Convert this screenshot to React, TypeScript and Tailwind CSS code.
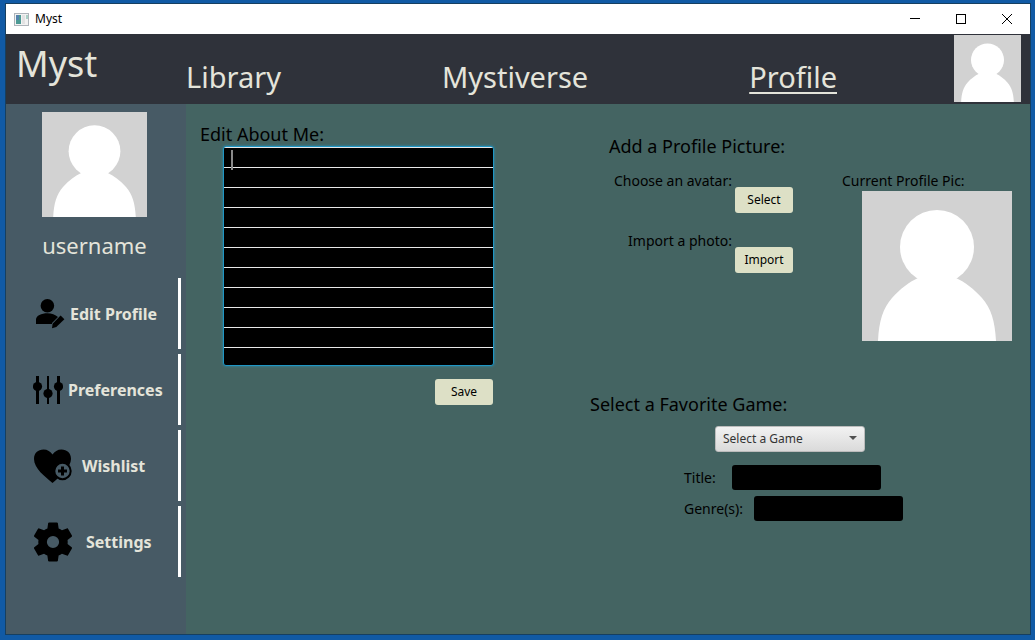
import type { ReactNode } from "react";

const comic = "font-['Comic_Sans_MS','Noto_Sans',sans-serif]";
const heading = "text-lg leading-6";
const caption = "text-sm leading-5";

function Avatar({ className }: { className: string }) {
  return (
    <svg viewBox="0 0 150 150" className={className} role="img" aria-label="Profile picture">
      <rect width="150" height="150" fill="#d2d2d2" />
      <circle cx="75" cy="56" r="37" fill="#fff" />
      <path
        d="M16 150C17 130 21 117 30 107C38 98 47 91 56 87H94C103 91 112 98 120 107C129 117 133 130 134 150Z"
        fill="#fff"
      />
    </svg>
  );
}

function EditProfileIcon() {
  return (
    <svg viewBox="0 0 30 30" className="ml-[3px] mr-1 h-[30px] w-[30px] shrink-0" aria-hidden="true">
      <circle cx="11.4" cy="6.8" r="6.8" />
      <path d="M0 25V20.5C0 16.5 5.5 14.2 11.4 14.2C15.6 14.2 19.3 15.6 22 18L16 24V25Z" />
      <path d="M24.6 16.6L28.4 20.2L20.3 28L16 29.2L16.6 24.8Z" />
    </svg>
  );
}

function PreferencesIcon() {
  return (
    <svg viewBox="0 0 30 30" className="mr-[5px] h-[30px] w-[30px] shrink-0" aria-hidden="true">
      <path d="M3 1H6V29H3ZM14 1H16V29H14ZM24 1H27V29H24Z" />
      <circle cx="4.5" cy="11.5" r="4.6" />
      <circle cx="15" cy="18.5" r="4.6" />
      <circle cx="25.5" cy="11.5" r="4.6" />
    </svg>
  );
}

function WishlistIcon() {
  return (
    <svg viewBox="0 0 40 36" className="mr-[9px] h-9 w-10 shrink-0" aria-hidden="true">
      <path d="M19.5 35C12 28.5 1 20.5 1 11C1 5 5 1.5 10.5 1.5C14.5 1.5 17.5 3.5 19.5 6.5C21.5 3.5 24.5 1.5 28.5 1.5C34 1.5 38 5 38 11C38 19 28 27.5 19.5 35Z" />
      <circle cx="29.5" cy="23" r="8.2" fill="#475a65" stroke="#000" strokeWidth="2" />
      <path d="M28 18.5H31V21.5H34V24.5H31V27.5H28V24.5H25V21.5H28Z" />
    </svg>
  );
}

function SettingsIcon() {
  return (
    <svg viewBox="2.27 2.2 19.46 19.6" className="mr-[13px] h-10 w-10 shrink-0" aria-hidden="true">
      <path d="M19.14 12.94c.04-.3.06-.61.06-.94 0-.32-.02-.64-.07-.94l2.03-1.58c.18-.14.23-.41.12-.61l-1.92-3.32c-.12-.22-.37-.29-.59-.22l-2.39.96c-.5-.38-1.03-.7-1.62-.94l-.36-2.54c-.04-.24-.24-.41-.48-.41h-3.84c-.24 0-.43.17-.47.41l-.36 2.54c-.59.24-1.13.57-1.62.94l-2.39-.96c-.22-.08-.47 0-.59.22L2.74 8.87c-.12.21-.08.47.12.61l2.03 1.58c-.05.3-.09.63-.09.94s.02.64.07.94l-2.03 1.58c-.18.14-.23.41-.12.61l1.92 3.32c.12.22.37.29.59.22l2.39-.96c.5.38 1.03.7 1.62.94l.36 2.54c.05.24.24.41.48.41h3.84c.24 0 .44-.17.47-.41l.36-2.54c.59-.24 1.13-.56 1.62-.94l2.39.96c.22.08.47 0 .59-.22l1.92-3.32c.12-.22.07-.47-.12-.61l-2.01-1.58zM12 15a3 3 0 1 1 0-6a3 3 0 0 1 0 6z" />
    </svg>
  );
}

function SideItem({ icon, children }: { icon: ReactNode; children: ReactNode }) {
  return (
    <button
      type="button"
      className="flex h-[71px] w-full items-center border-r-[3px] border-white pl-[27px] text-left text-base font-bold text-[#e4e4da]"
    >
      {icon}
      {children}
    </button>
  );
}

function Action({ children }: { children: ReactNode }) {
  return (
    <button
      type="button"
      className="h-[26px] w-[58px] shrink-0 rounded-[3px] bg-[#dde0c6] font-['Noto_Sans',sans-serif] text-xs text-black"
    >
      {children}
    </button>
  );
}

function PictureOption({ label, action }: { label: string; action: string }) {
  return (
    <div className="flex items-start justify-end gap-[3px]">
      <span className={caption}>{label}</span>
      <div className="flex pt-4">
        <Action>{action}</Action>
      </div>
    </div>
  );
}

export default function App() {
  return (
    <div className="flex min-h-screen bg-[#115aa5] pt-1 pr-[5px] pb-1.5 pl-1.5">
      <div className="flex flex-1 flex-col bg-[#446462] shadow-[0_0_0_1px_#163f60]">
        <div className="flex h-[30px] items-center bg-white pl-2 font-['Noto_Sans',sans-serif] text-xs text-black">
          <svg viewBox="0 0 15 13" className="mr-1.5 h-[13px] w-[15px]" aria-hidden="true">
            <rect x="0.5" y="0.5" width="14" height="12" fill="#f2f2f2" stroke="#aeb4ba" />
            <rect x="2" y="2" width="5" height="9" fill="#4c9a94" />
            <rect x="2" y="2" width="3" height="5" fill="#5583ad" />
            <rect x="8" y="2" width="3" height="9" fill="#e2e2e2" />
            <rect x="12" y="2" width="2" height="4" fill="#a9d0c6" />
          </svg>
          <span className="flex-1">Myst</span>
          <button type="button" aria-label="Minimize" className="flex h-full w-[46px] items-center justify-center">
            <svg viewBox="0 0 10 10" className="h-2.5 w-2.5" stroke="#000" fill="none" aria-hidden="true">
              <path d="M0 4.5H10" />
            </svg>
          </button>
          <button type="button" aria-label="Maximize" className="flex h-full w-[46px] items-center justify-center">
            <svg viewBox="0 0 10 10" className="h-2.5 w-2.5" stroke="#000" fill="none" aria-hidden="true">
              <rect x="0.5" y="0.5" width="9" height="9" />
            </svg>
          </button>
          <button type="button" aria-label="Close" className="flex h-full w-[46px] items-center justify-center">
            <svg viewBox="0 0 10 10" className="h-2.5 w-2.5" stroke="#000" fill="none" aria-hidden="true">
              <path d="M0 0L10 10M10 0L0 10" />
            </svg>
          </button>
        </div>

        <header className={`flex h-[70px] bg-[#2f323a] text-[#e4e4da] ${comic}`}>
          <div className="w-[180px] shrink-0 pt-[3px] pl-2.5 text-4xl leading-[54px]">Myst</div>
          <nav className="mr-[117px] flex flex-1 items-end justify-between pb-[9px] text-[29px] leading-9">
            <a href="#library">Library</a>
            <a href="#mystiverse">Mystiverse</a>
            <a href="#profile" className="underline decoration-2 underline-offset-4">
              Profile
            </a>
          </nav>
          <Avatar className="mt-px mr-[9px] h-[67px] w-[67px] shrink-0" />
        </header>

        <div className={`flex flex-1 text-black ${comic}`}>
          <aside className="w-[180px] shrink-0 bg-[#475a65] pt-2 pr-[5px]">
            <div className="flex flex-col items-center pl-0.5">
              <Avatar className="h-[105px] w-[105px]" />
              <div className="mt-2 mb-3 font-['Noto_Sans',sans-serif] text-[22px] leading-[41px] text-[#e4e4da]">
                username
              </div>
            </div>
            <nav className="flex flex-col gap-[5px]">
              <SideItem icon={<EditProfileIcon />}>Edit Profile</SideItem>
              <SideItem icon={<PreferencesIcon />}>Preferences</SideItem>
              <SideItem icon={<WishlistIcon />}>Wishlist</SideItem>
              <SideItem icon={<SettingsIcon />}>Settings</SideItem>
            </nav>
          </aside>

          <main className="flex flex-1 items-start justify-between pr-[18px]">
            <section className="flex flex-col pt-[18px] pl-3.5">
              <label htmlFor="about" className={heading}>
                Edit About Me:
              </label>
              <div className="relative ml-[23px] flex">
                <textarea
                  id="about"
                  className="h-[220px] w-[271px] resize-none rounded-[3px] border border-[#1f96c4] bg-black bg-[linear-gradient(#e8e8e8_1px,transparent_1px)] bg-size-[100%_20px] px-2 text-sm leading-5 text-white shadow-[0_0_3px_#2a8fb0] outline-none"
                />
                <span className="pointer-events-none absolute top-1 left-2 h-5 w-0.5 bg-[#8a8a8a]" />
              </div>
              <div className="mt-[13px] flex justify-end pr-px">
                <Action>Save</Action>
              </div>
            </section>

            <section className="flex w-[422px] flex-col">
              <div className="flex justify-between">
                <div className="pt-[30px] pl-[19px]">
                  <h2 className={heading}>Add a Profile Picture:</h2>
                  <div className="mt-[13px] flex w-[184px] flex-col gap-[18px]">
                    <PictureOption label="Choose an avatar:" action="Select" />
                    <PictureOption label="Import a photo:" action="Import" />
                  </div>
                </div>
                <figure className="flex w-[170px] flex-col pt-[67px]">
                  <figcaption className={caption}>Current Profile Pic:</figcaption>
                  <Avatar className="h-[150px] w-[150px] self-end" />
                </figure>
              </div>

              <label htmlFor="game" className={`mt-[51px] ${heading}`}>
                Select a Favorite Game:
              </label>
              <div className="relative mt-[9px] ml-[125px] w-[150px]">
                <select
                  id="game"
                  className="h-[26px] w-full appearance-none rounded-[3px] border border-[#bcbcbc] bg-linear-to-b from-[#f2f2f2] to-[#dadada] pl-[7px] font-['Noto_Sans',sans-serif] text-xs text-[#333]"
                >
                  <option>Select a Game</option>
                </select>
                <svg
                  viewBox="0 0 8 4"
                  className="pointer-events-none absolute top-[11px] right-2 h-1 w-2"
                  fill="#505050"
                  aria-hidden="true"
                >
                  <path d="M0 0H8L4 4Z" />
                </svg>
              </div>
              <div className="mt-[13px] ml-[94px] flex flex-col gap-1.5">
                <div className="flex items-center gap-[11px]">
                  <label htmlFor="title" className={`w-[37px] whitespace-nowrap ${caption}`}>
                    Title:
                  </label>
                  <input id="title" readOnly className="h-[25px] w-[149px] rounded-[3px] bg-black px-2 text-xs text-white" />
                </div>
                <div className="flex items-center gap-[11px]">
                  <label htmlFor="genres" className={`w-[59px] whitespace-nowrap ${caption}`}>
                    Genre(s):
                  </label>
                  <input id="genres" readOnly className="h-[25px] w-[149px] rounded-[3px] bg-black px-2 text-xs text-white" />
                </div>
              </div>
            </section>
          </main>
        </div>
      </div>
    </div>
  );
}
